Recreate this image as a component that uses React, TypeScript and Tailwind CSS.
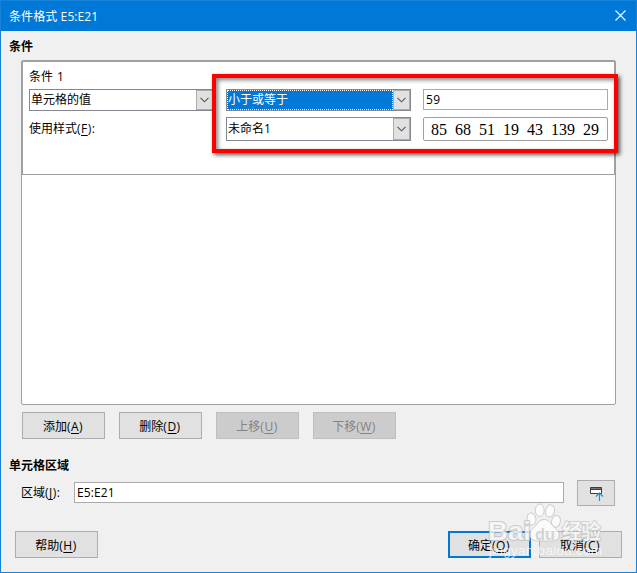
import React from 'react';

type LabelProps = { text: string; hotkey?: string; suffix?: string };

const Label: React.FC<LabelProps> = ({ text, hotkey, suffix = '' }) => (
  <span className="whitespace-nowrap">
    {text}
    {hotkey && (
      <span className="tracking-[0.5px]">
        (<span className="underline underline-offset-2">{hotkey}</span>)
      </span>
    )}
    {suffix}
  </span>
);

type ButtonProps = LabelProps & { disabled?: boolean; primary?: boolean };

const Button: React.FC<ButtonProps> = ({ disabled, primary, ...label }) => {
  let look = 'border border-[#adadad] bg-[#e1e1e1] text-black';
  if (disabled) look = 'border border-[#bfbfbf] bg-[#cccccc] text-[#838383]';
  if (primary) look = 'border-2 border-[#0078d7] bg-[#e1e1e1] text-black';
  return (
    <button disabled={disabled} className={`flex h-[27px] w-[83px] shrink-0 items-center justify-center pr-px pt-0.5 ${look}`}>
      <Label {...label} />
    </button>
  );
};

type ComboProps = { value: string; selected?: boolean; tall?: boolean };

const Combo: React.FC<ComboProps> = ({ value, selected, tall }) => (
  <div className={`flex w-[185px] shrink-0 border border-[#828790] bg-white ${tall ? 'h-6' : 'h-[22px]'}`}>
    <div
      className={`flex min-w-0 flex-1 items-center ${
        selected ? 'border border-dotted border-white bg-[#0078d7] text-white' : 'pl-px'
      }`}
    >
      {value}
    </div>
    <div className="flex w-[17px] items-center justify-center border border-[#adadad] bg-[#e1e1e1] pr-px">
      <svg width="9" height="6" viewBox="0 0 9 6" fill="none" stroke="#555" strokeWidth="1.1">
        <path d="M.5.8 4.5 4.8 8.5.8" />
      </svg>
    </div>
  </div>
);

const Watermark: React.FC = () => (
  <svg
    className="pointer-events-none absolute left-[479px] top-[497px]"
    width="130"
    height="68"
    viewBox="0 0 130 68"
    fill="#fff"
    fillOpacity=".75"
    stroke="#bcbcbc"
    strokeOpacity=".7"
    strokeWidth="1"
    fontFamily="'Liberation Sans', 'Noto Sans CJK SC', sans-serif"
  >
    <ellipse cx="51.5" cy="21" rx="4.4" ry="6" transform="rotate(-12 51.5 21)" />
    <ellipse cx="59.7" cy="12.3" rx="4.4" ry="6.2" />
    <ellipse cx="70" cy="13" rx="4.4" ry="6.2" transform="rotate(12 70 13)" />
    <ellipse cx="76" cy="23.3" rx="4.4" ry="6" transform="rotate(12 76 23.3)" />
    <path d="M64 21.5c-5 0-6 4-9 7-4 4-6 5-5 10 2 5 7 4.5 14 4.5s13 1 15-4c1-5-2-7-5-10-4-4-5-7.5-10-7.5Z" />
    <g fontWeight="700" paintOrder="stroke">
      <text x="8" y="42" fontSize="26" textLength="43" lengthAdjust="spacingAndGlyphs" strokeWidth="2">Bai</text>
      <text x="55" y="41.5" fontSize="17" textLength="20" lengthAdjust="spacingAndGlyphs" fill="#c8c8c8" stroke="none">du</text>
      <text x="82" y="41" fontSize="20" textLength="39" strokeWidth="1.6">经验</text>
    </g>
    <text x="9" y="56.5" fontSize="13.5" textLength="113" stroke="none" fillOpacity=".7">jingyan.baidu.com</text>
  </svg>
);

const App: React.FC = () => (
  <div className="relative flex h-[573px] w-[637px] flex-col border border-[#1683d9] bg-[#f0f0f0] font-['Open_Sans','Noto_Sans_CJK_SC',sans-serif] text-xs leading-4 text-black">
    <header className="flex h-[30px] shrink-0 items-center justify-between bg-[#0078d7] pl-2 pr-[10px] text-white">
      <span className="pt-0.5 tracking-[0.1px]">条件格式 E5:E21</span>
      <svg width="11" height="11" viewBox="0 0 11 11" stroke="white" strokeWidth="1.1" className="mb-px">
        <path d="m.5.5 10 10M10.5.5l-10 10" />
      </svg>
    </header>

    <h2 className="mt-2 h-4 pl-2 font-bold">条件</h2>

    <section className="ml-5 mt-[5px] h-[345px] w-[595px] shrink-0 rounded-[2px] border border-[#a0a0a0] bg-white">
      <div className="h-[114px] border border-[#a0a0a0] pl-[6px] pt-[7px]">
        <div className="[word-spacing:1px]">条件 1</div>
        <div className="mt-1 flex items-start">
          <Combo value="单元格的值" />
          <div className="ml-3">
            <Combo value="小于或等于" selected />
          </div>
          <div className="ml-3 flex h-[21px] w-[185px] items-center border border-[#ababab] pl-[2px] tracking-[0.3px]">
            59
          </div>
        </div>
        <div className="mt-[6px] flex">
          <div className="flex h-6 w-[197px] items-center">
            <Label text="使用样式" hotkey="F" suffix=":" />
          </div>
          <Combo value="未命名1" tall />
          <div className="ml-3 flex h-6 w-[185px] items-center overflow-hidden whitespace-nowrap rounded-[2px] border border-[#a0a0a0] pl-[7px] pt-0.5 font-['Liberation_Serif',serif] text-base leading-5 [word-spacing:4px]">
            85 68 51 19 43 139 29
          </div>
        </div>
      </div>
    </section>

    <div className="ml-[21px] mt-[7px] flex gap-[14px]">
      <Button text="添加" hotkey="A" />
      <Button text="删除" hotkey="D" />
      <Button text="上移" hotkey="U" disabled />
      <Button text="下移" hotkey="W" disabled />
    </div>

    <h2 className="mt-[19px] h-4 pl-2 font-bold">单元格区域</h2>

    <div className="mt-[6px] flex h-[26px] items-start pl-5">
      <div className="w-[53px] pt-[5px]">
        <Label text="区域" hotkey="J" suffix=":" />
      </div>
      <div className="mt-0.5 flex h-[21px] w-[490px] items-center border border-[#ababab] bg-white pl-[2px] tracking-[0.1px]">
        E5:E21
      </div>
      <div className="ml-[13px] h-[26px] w-[38px] border border-[#adadad] bg-[#e1e1e1] pl-3 pt-[6px]">
        <svg width="14" height="15" viewBox="0 0 14 15" fill="none">
          <path d="M.5.5h11v6H.5z" fill="white" stroke="#3d3d3b" />
          <path d="M1 1.5h10" stroke="#797774" />
          <path d="M0 2.5h12" stroke="#3d3d3b" />
          <path d="M9.5 5.5V14M6 9.5 9.5 6 13 9.5" stroke="#1e8bcd" strokeWidth="1.1" />
        </svg>
      </div>
    </div>

    <footer className="mt-[25px] flex pl-[14px]">
      <Button text="帮助" hotkey="H" />
      <div className="ml-[350px] flex gap-2">
        <Button text="确定" hotkey="O" primary />
        <Button text="取消" hotkey="C" />
      </div>
    </footer>

    {/* Highlight around the condition fields */}
    <div className="pointer-events-none absolute left-[211px] top-[73px] h-[79px] w-[406px] border-4 border-[#fe0000] shadow-[2px_2px_4px_rgba(0,0,0,0.65),inset_2px_2px_4px_rgba(0,0,0,0.5)]" />
    <Watermark />
  </div>
);

export default App;
